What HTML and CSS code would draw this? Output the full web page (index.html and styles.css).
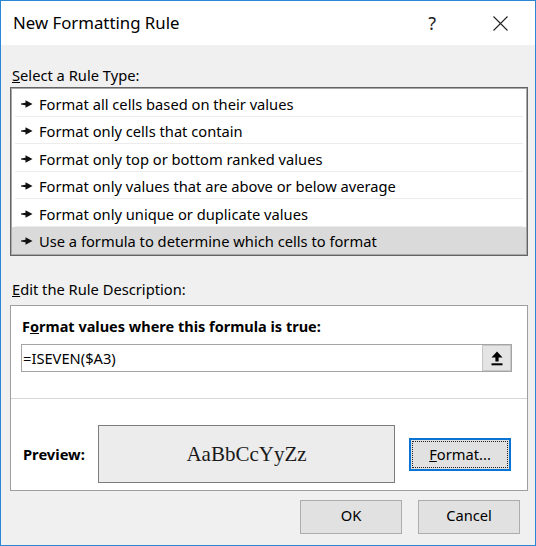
FILE: index.html
```html
<!DOCTYPE html>
<html>
<head>
<meta charset="utf-8">
<title>New Formatting Rule</title>
<link rel="stylesheet" href="styles.css">
</head>
<body>
<div class="window">
  <div class="titlebar">
    <span class="title">New Formatting Rule</span>
    <span class="help">?</span>
    <svg class="close" viewBox="0 0 15 15" width="15" height="15"><path d="M0.5 0.5 L14.5 14.5 M14.5 0.5 L0.5 14.5" stroke="#222" stroke-width="1.1" fill="none"/></svg>
  </div>
  <div class="body">
    <div class="label"><u>S</u>elect a Rule Type:</div>
    <div class="list">
      <div class="row"><svg class="arrow" viewBox="0 0 12 8" width="12" height="8"><path d="M0 3.4 L4.5 2.8 L4.5 0.3 L11.5 4 L4.5 7.7 L4.5 5.2 L0 4.6 Z" fill="#111"/></svg><span>Format all cells based on their values</span></div>
      <div class="row"><svg class="arrow" viewBox="0 0 12 8" width="12" height="8"><path d="M0 3.4 L4.5 2.8 L4.5 0.3 L11.5 4 L4.5 7.7 L4.5 5.2 L0 4.6 Z" fill="#111"/></svg><span>Format only cells that contain</span></div>
      <div class="row"><svg class="arrow" viewBox="0 0 12 8" width="12" height="8"><path d="M0 3.4 L4.5 2.8 L4.5 0.3 L11.5 4 L4.5 7.7 L4.5 5.2 L0 4.6 Z" fill="#111"/></svg><span>Format only top or bottom ranked values</span></div>
      <div class="row"><svg class="arrow" viewBox="0 0 12 8" width="12" height="8"><path d="M0 3.4 L4.5 2.8 L4.5 0.3 L11.5 4 L4.5 7.7 L4.5 5.2 L0 4.6 Z" fill="#111"/></svg><span>Format only values that are above or below average</span></div>
      <div class="row"><svg class="arrow" viewBox="0 0 12 8" width="12" height="8"><path d="M0 3.4 L4.5 2.8 L4.5 0.3 L11.5 4 L4.5 7.7 L4.5 5.2 L0 4.6 Z" fill="#111"/></svg><span>Format only unique or duplicate values</span></div>
      <div class="row selected"><svg class="arrow" viewBox="0 0 12 8" width="12" height="8"><path d="M0 3.4 L4.5 2.8 L4.5 0.3 L11.5 4 L4.5 7.7 L4.5 5.2 L0 4.6 Z" fill="#111"/></svg><span>Use a formula to determine which cells to format</span></div>
    </div>
    <div class="label label-edit"><u>E</u>dit the Rule Description:</div>
    <div class="desc">
      <div class="desc-top">
        <div class="bold heading">F<u>o</u>rmat values where this formula is true:</div>
        <div class="input">
          <span class="input-text">=ISEVEN($A3)</span>
          <span class="collapse-btn"><svg viewBox="0 0 12 15" width="12" height="15"><path d="M6 0.5 L11.5 6.5 L7.6 6.5 L7.6 10.5 L4.4 10.5 L4.4 6.5 L0.5 6.5 Z" fill="#000"/><rect x="0.5" y="12.3" width="11" height="2" fill="#000"/></svg></span>
        </div>
      </div>
      <div class="desc-bottom">
        <span class="bold preview-label">Preview:</span>
        <div class="preview">AaBbCcYyZz</div>
        <button class="btn btn-focus"><span class="focus-ring"><u>F</u>ormat...</span></button>
      </div>
    </div>
    <div class="actions">
      <button class="btn">OK</button>
      <button class="btn">Cancel</button>
    </div>
  </div>
</div>
</body>
</html>
```
FILE: styles.css
```css
* { box-sizing: border-box; }
html, body { margin: 0; padding: 0; }
body {
  width: 536px;
  height: 546px;
  font-family: "Noto Sans", "Open Sans", sans-serif;
  font-size: 14.7px;
  color: #000;
  background: #f0f0f0;
  overflow: hidden;
}
.window {
  width: 536px;
  height: 546px;
  border: 1px solid #2b86d6;
  background: #f0f0f0;
  display: flex;
  flex-direction: column;
}
.titlebar {
  height: 44px;
  flex: none;
  background: #fff;
  display: flex;
  align-items: center;
  padding: 0 27px 0 12px;
}
.title { font-size: 16.8px; flex: 1; line-height: 22px; }
.help { font-size: 18px; margin-right: 57px; color: #222; }
.close { display: block; }
.body {
  padding: 20px 7px 0 9px;
  display: flex;
  flex-direction: column;
}
.label { line-height: 20px; padding-left: 2px; }
.list {
  margin-top: 2px;
  border: 1px solid #646464;
  box-shadow: inset 0 0 0 1px #a8a8a8;
  background: #fff;
  padding: 1px;
}
.row {
  height: 27.5px;
  display: flex;
  align-items: center;
  padding: 2px 0 0 9px;
  gap: 6px;
  line-height: 20px;
  background: linear-gradient(#ececec, #ececec) no-repeat center bottom / calc(100% - 6px) 1px;
}
.row.selected { background: #dadada; }
.arrow { display: block; flex: none; }
.label-edit { margin-top: 23px; }
.desc {
  margin-top: 6px;
  border: 1px solid #9e9e9e;
  background: #fff;
}
.desc-top {
  padding: 10px 15px 26px 10px;
  border-bottom: 1px solid #d6d6d6;
}
.bold { font-weight: bold; line-height: 20px; }
.heading { padding-left: 1px; font-size: 14.5px; }
.input {
  margin-top: 8px;
  height: 28px;
  border: 1px solid #a5a5a5;
  display: flex;
  align-items: stretch;
}
.input-text { flex: 1; padding-left: 1px; line-height: 26px; }
.collapse-btn {
  width: 29px;
  background: #e4e4e4;
  border: 1px solid #c6c6c6;
  display: flex;
  align-items: center;
  justify-content: center;
}
.collapse-btn svg { display: block; }
.desc-bottom {
  display: flex;
  align-items: center;
  padding: 26px 15px 7px 11px;
}
.preview-label { width: 76px; padding-left: 1px; }
.preview {
  width: 297px;
  height: 58px;
  border: 1px solid #7d7d7d;
  background: #ececec;
  display: flex;
  align-items: center;
  justify-content: center;
  font-family: "Liberation Serif", serif;
  font-size: 21px;
  color: #1a1a1a;
}
.btn {
  width: 102px;
  height: 34px;
  background: #e1e1e1;
  border: 1px solid #adadad;
  font-family: inherit;
  font-size: 14.7px;
  color: #000;
  padding: 0 0 4px;
}
.btn-focus {
  margin-left: 14px;
  height: 33px;
  border: 2px solid #0a74d4;
  padding: 1px;
}
.focus-ring {
  display: flex;
  align-items: center;
  justify-content: center;
  height: 100%;
  border: 1px dotted #222;
}
.actions {
  display: flex;
  justify-content: flex-end;
  gap: 16px;
  margin-top: 9px;
  padding-right: 8px;
}
```
